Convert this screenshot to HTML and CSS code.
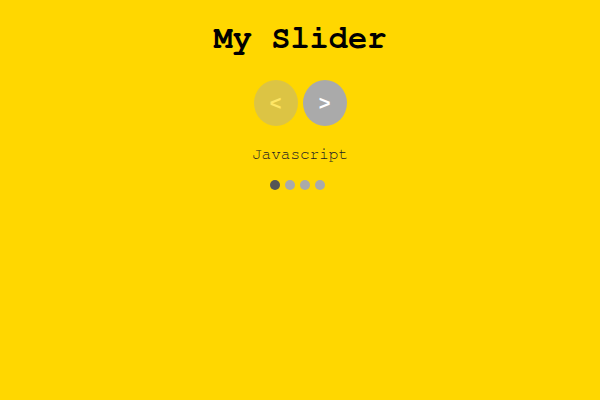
FILE: index.html
```html
<!DOCTYPE html>
<html>
<head>
<meta charset="utf-8">
<link rel="stylesheet" href="styles.css">
</head>
<body>
<div class="slider">
  <h1 class="title">My Slider</h1>
  <div class="controls">
    <button class="nav nav-disabled">&lt;</button>
    <button class="nav">&gt;</button>
  </div>
  <p class="slide">Javascript</p>
  <div class="dots">
    <span class="dot dot-active"></span>
    <span class="dot"></span>
    <span class="dot"></span>
    <span class="dot"></span>
  </div>
</div>
</body>
</html>
```
FILE: styles.css
```css
html, body {
  margin: 0;
  padding: 0;
  background: #ffd700;
  height: 100%;
}
body {
  font-family: FreeMono, "Liberation Mono", monospace;
}
.slider {
  display: flex;
  flex-direction: column;
  align-items: center;
}
.title {
  margin: 20px 0 0;
  font-size: 32px;
  line-height: 36px;
  font-weight: bold;
  color: #000;
}
.controls {
  display: flex;
  gap: 5px;
  margin-top: 24px;
}
.nav {
  width: 44px;
  height: 46px;
  border: none;
  border-radius: 50%;
  background: #aaaaaa;
  color: #fff;
  font-family: "Liberation Sans", Arial, sans-serif;
  font-weight: bold;
  font-size: 20px;
  padding: 0;
}
.nav-disabled {
  opacity: 0.4;
}
.slide {
  margin: 19px 0 0;
  font-size: 16px;
  line-height: 18px;
  color: #222;
}
.dots {
  display: flex;
  gap: 5px;
  margin-top: 17px;
  margin-right: 5px;
}
.dot {
  width: 10px;
  height: 10px;
  border-radius: 50%;
  background: #aaaaaa;
}
.dot-active {
  background: #555555;
}
```
